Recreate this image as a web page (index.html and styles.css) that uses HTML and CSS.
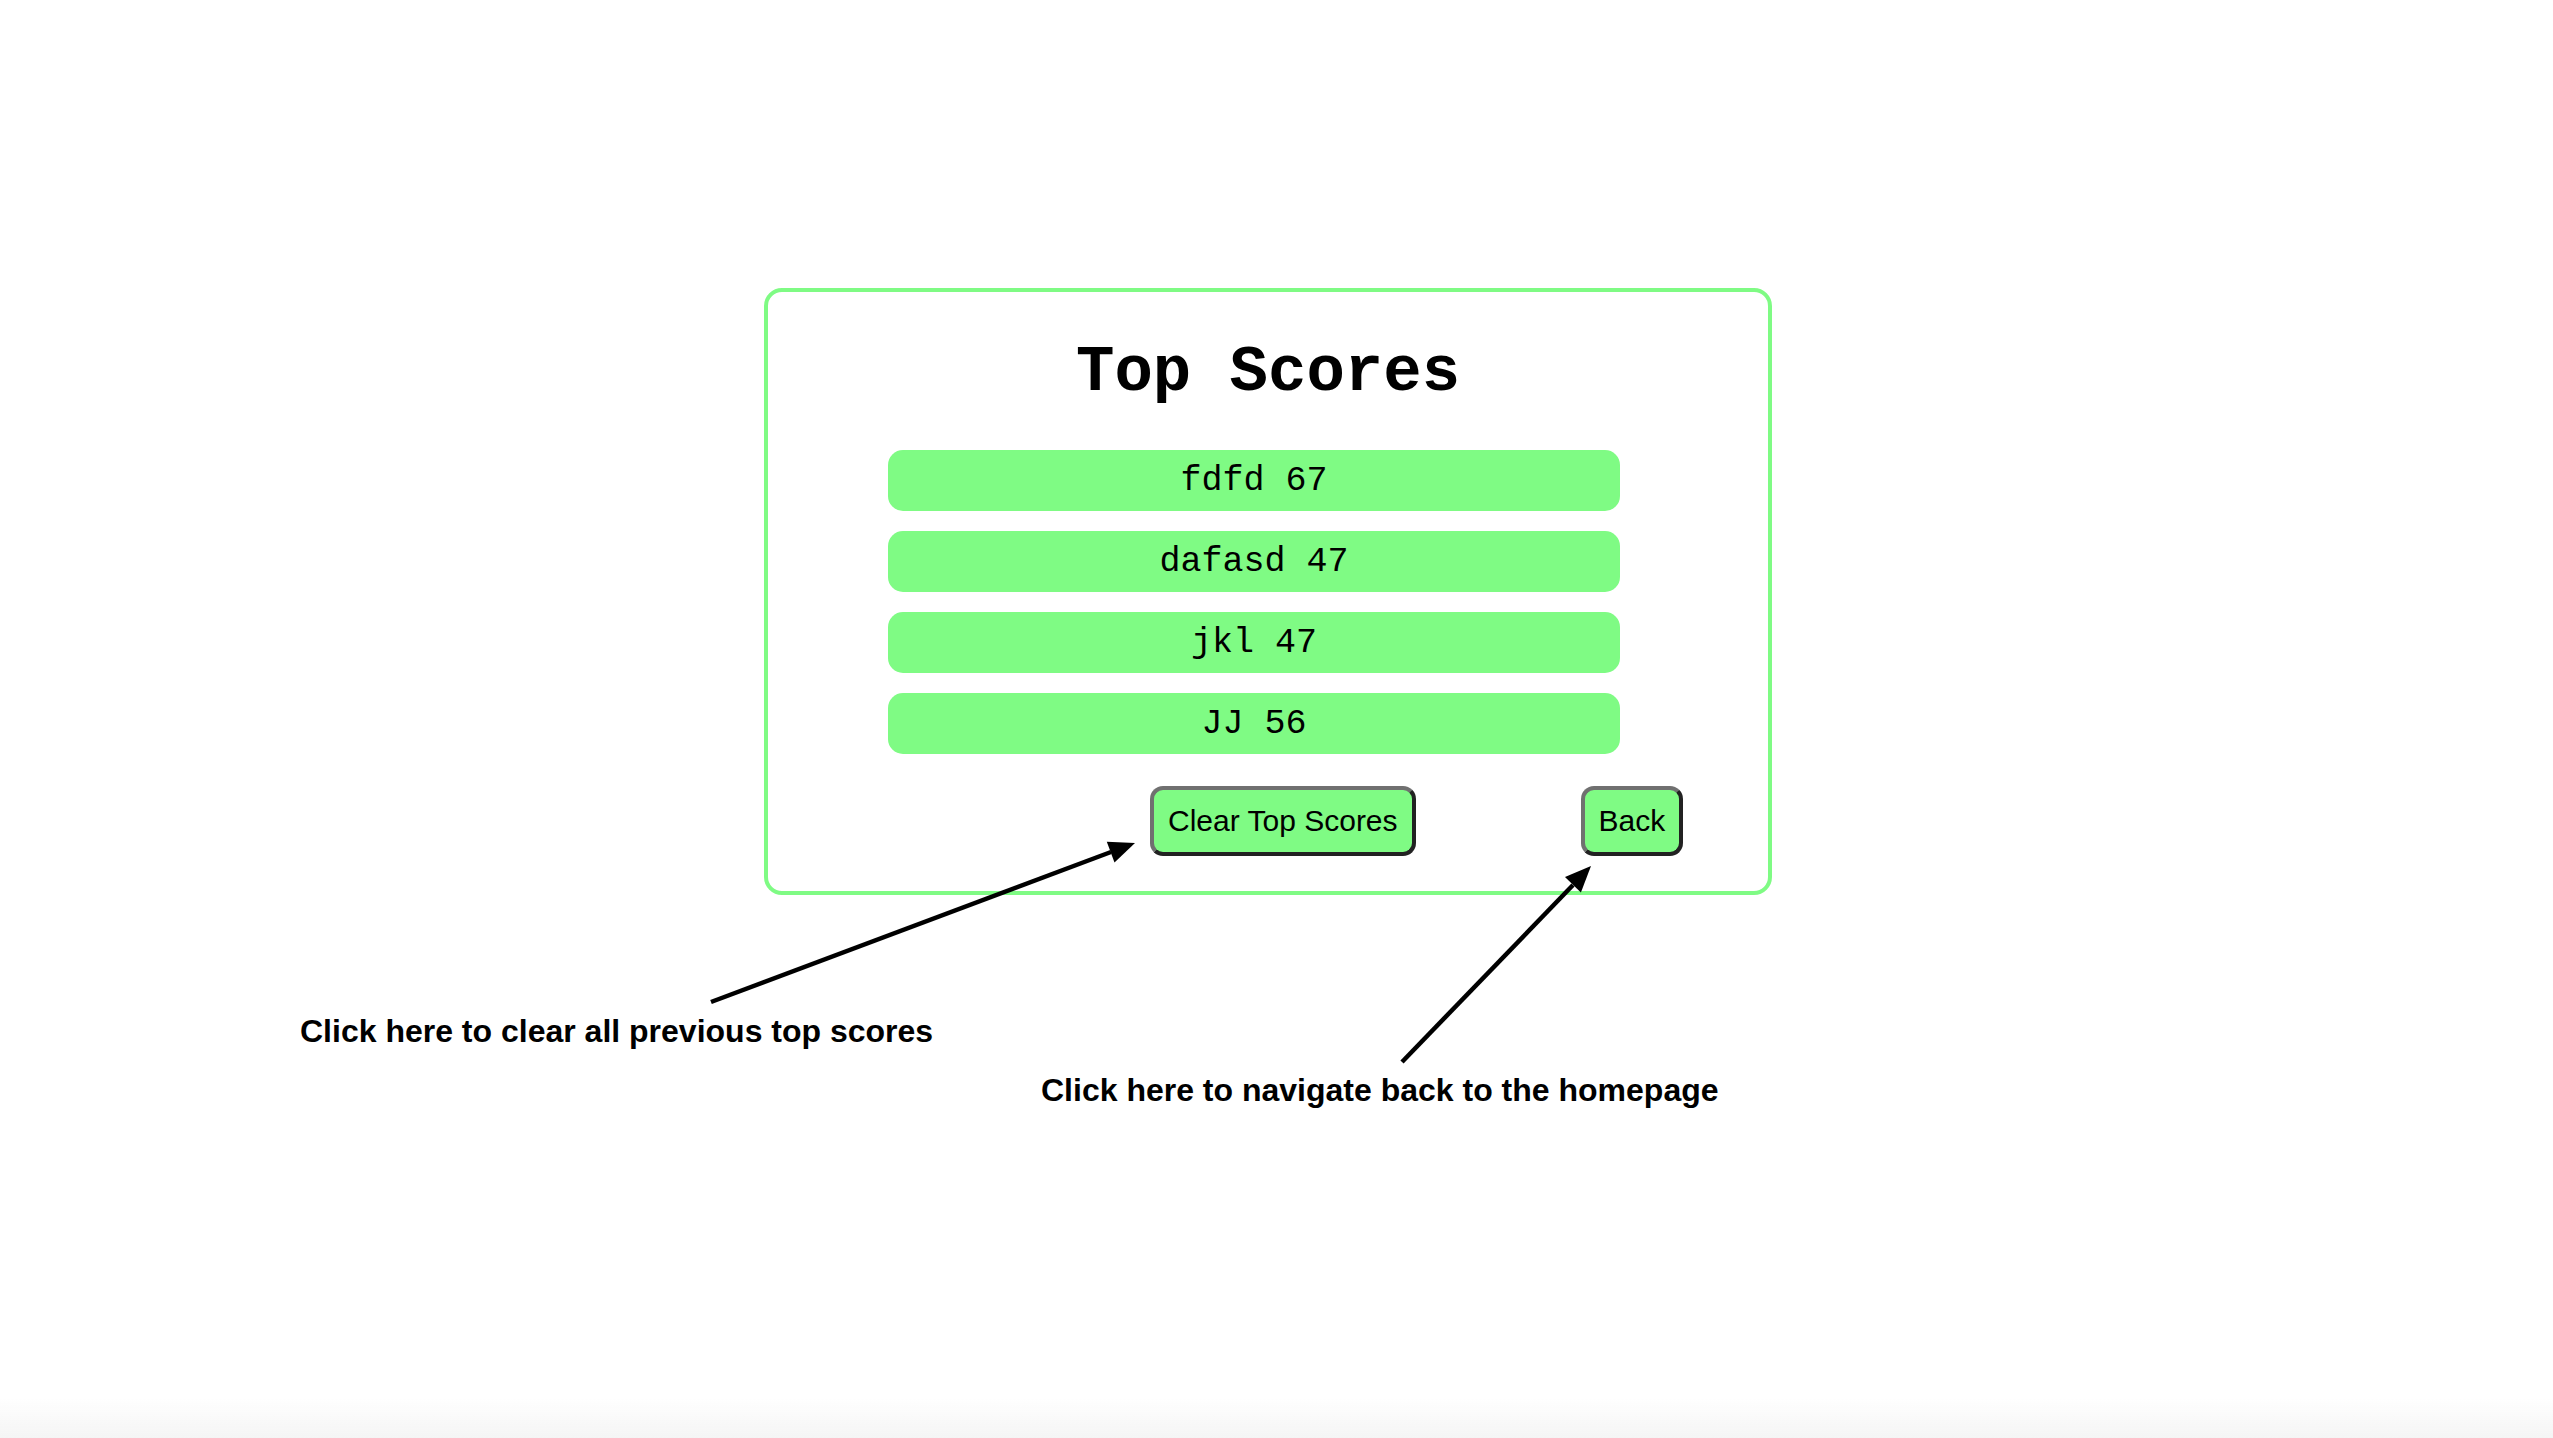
FILE: index.html
```html
<!DOCTYPE html>
<html lang="en">
<head>
  <meta charset="UTF-8" />
  <title>Top Scores</title>
  <meta name="viewport" content="width=device-width, initial-scale=1.0" />
  <link rel="stylesheet" href="styles.css">
</head>
<body>
  <div class="page">

    <!-- Scores card -->
    <div class="score-card">
      <h1>Top Scores</h1>
      <ul class="score-list">
        <li>fdfd 67</li>
        <li>dafasd 47</li>
        <li>jkl 47</li>
        <li>JJ 56</li>
      </ul>
      <div class="card-actions">
        <button class="clear-btn">Clear Top Scores</button>
        <button class="back-btn">Back</button>
      </div>
    </div>

    <!-- Annotations -->
    <svg class="arrows" width="2553" height="1438" viewBox="0 0 2553 1438">
      <line x1="711" y1="1002" x2="1111" y2="852" stroke="#000" stroke-width="4.5" />
      <polygon points="1135,843 1114.5,862.4 1106.8,841.8" fill="#000" />
      <line x1="1402" y1="1062" x2="1573" y2="885" stroke="#000" stroke-width="4.5" />
      <polygon points="1591,866 1580.9,892.4 1565,877.1" fill="#000" />
    </svg>
    <p class="note note-clear">Click here to clear all previous top scores</p>
    <p class="note note-back">Click here to navigate back to the homepage</p>

  </div>
</body>
</html>
```

FILE: styles.css
```css
body {
  margin: 0;
  background: #fff;
  color: #000;
  font-family: 'Liberation Sans', Arial, sans-serif;
}

.page {
  position: relative;
  min-height: 100vh;
  padding-top: 288px;
  box-sizing: border-box;
}

/* window bottom shade */
.page::after {
  content: '';
  position: fixed;
  left: 0;
  right: 0;
  bottom: 0;
  height: 40px;
  background: linear-gradient(to bottom, rgba(240,240,240,0), rgba(240,240,240,0.7));
  pointer-events: none;
}

.score-card {
  width: 1000px;
  margin-left: 764px;
  border: 4px solid #7ffb84;
  border-radius: 18px;
  padding: 49px 0 35px;
}

.score-card h1 {
  margin: 0;
  text-align: center;
  font-family: 'Liberation Mono', 'Courier New', monospace;
  font-weight: bold;
  font-size: 64px;
  line-height: 64px;
}

.score-list {
  list-style: none;
  margin: 45px 0 0 120px;
  padding: 0;
  width: 732px;
  display: flex;
  flex-direction: column;
  gap: 20px;
}

.score-list li {
  background: #7ffb84;
  border-radius: 15px;
  height: 61px;
  line-height: 62px;
  text-align: center;
  font-family: 'Liberation Mono', 'Courier New', monospace;
  font-size: 35px;
}

.card-actions {
  display: flex;
  margin-top: 32px;
  padding-left: 382px;
  gap: 165px;
}

.card-actions button {
  background: #7ffb84;
  color: #000;
  font-family: 'Liberation Sans', Arial, sans-serif;
  font-size: 30px;
  line-height: 34px;
  padding: 14px 14px;
  border: 4px solid;
  border-color: #707070 #222 #222 #707070;
  border-radius: 13px;
  cursor: pointer;
}

.arrows {
  position: absolute;
  top: 0;
  left: 0;
  pointer-events: none;
}

.note {
  position: absolute;
  margin: 0;
  font-weight: bold;
  font-size: 32px;
  line-height: 32px;
  white-space: nowrap;
}

.note-clear {
  left: 300px;
  top: 1015px;
}

.note-back {
  left: 1041px;
  top: 1074px;
}
```
